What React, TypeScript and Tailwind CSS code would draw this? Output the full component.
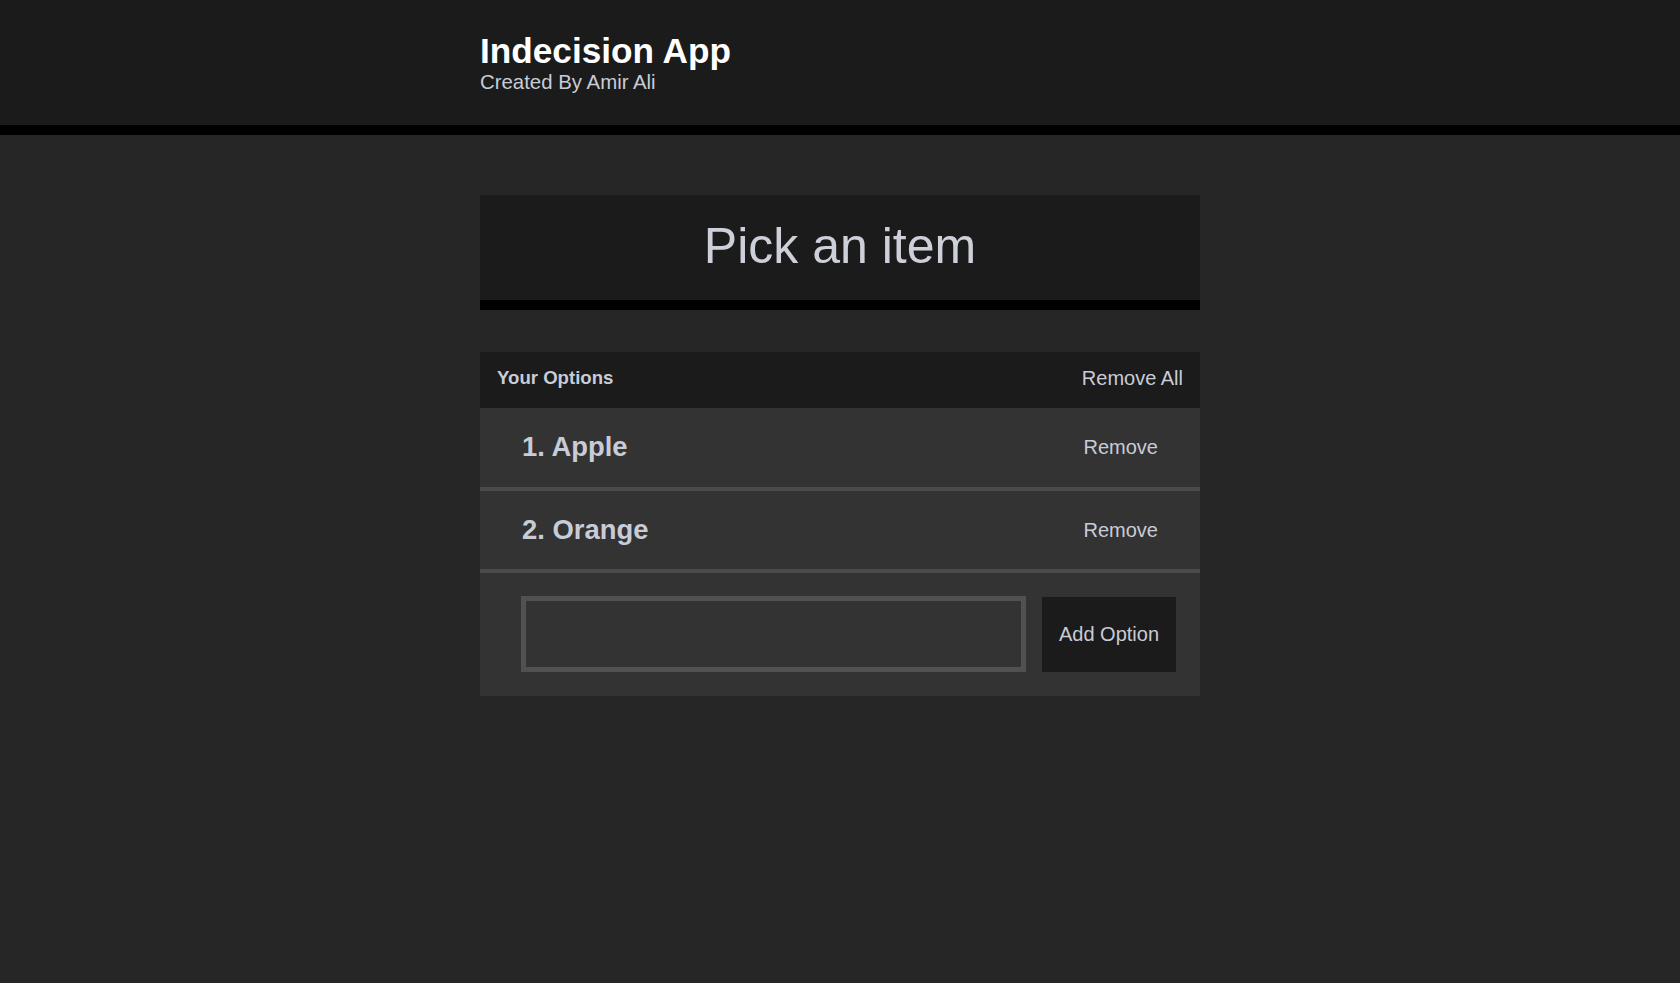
import React from "react";

const options = ["Apple", "Orange"];

export default function App() {
  return (
    <div className="min-h-screen bg-[#262626] font-['Liberation_Sans',Arial,sans-serif]">
      <header className="h-[135px] bg-[#1b1b1b] border-b-[10px] border-black">
        <div className="w-[720px] mx-auto pt-[32px]">
          <h1 className="text-[35.2px] leading-[38px] font-bold text-white">Indecision App</h1>
          <h2 className="text-[20.4px] leading-[20px] mt-[2px] text-[#c8ccd6]">Created By Amir Ali</h2>
        </div>
      </header>
      <main className="w-[720px] mx-auto pt-[60px]">
        <div className="h-[115px] pt-[1px] bg-[#1b1b1b] border-b-[10px] border-black text-center text-[50px] leading-[101px] text-[#cdd0d9]">
          Pick an item
        </div>
        <div className="mt-[42px] bg-[#333333]">
          <div className="h-[56px] bg-[#1b1b1b] flex items-center justify-between px-[17px] pb-[4px]">
            <h3 className="text-[18.6px] font-bold text-[#c8ccd6]">Your Options</h3>
            <button className="text-[20px] text-[#c8ccd6]">Remove All</button>
          </div>
          {options.map((o, i) => (
            <div
              key={o}
              className={`${i === 0 ? "h-[83px] pb-[2px]" : "h-[82px]"} flex items-center justify-between pl-[42px] pr-[42px] border-b-[4px] border-[#4b4b4b]`}
            >
              <p className="text-[27.4px] font-bold text-[#c8ccd6]">
                {i + 1}. {o}
              </p>
              <button className="text-[20px] text-[#c8ccd6]">Remove</button>
            </div>
          ))}
          <form className="flex items-start gap-[16px] pt-[23px] pb-[24px] pl-[41px] pr-[24px]">
            <input
              type="text"
              className="flex-1 h-[76px] bg-[#333333] border-[5px] border-[#515151] outline-none text-[20px] text-[#c8ccd6] px-3"
            />
            <button
              type="button"
              className="mt-[1px] w-[134px] h-[75px] pb-[2px] bg-[#1b1b1b] text-[20px] text-[#c8ccd6]"
            >
              Add Option
            </button>
          </form>
        </div>
      </main>
    </div>
  );
}
